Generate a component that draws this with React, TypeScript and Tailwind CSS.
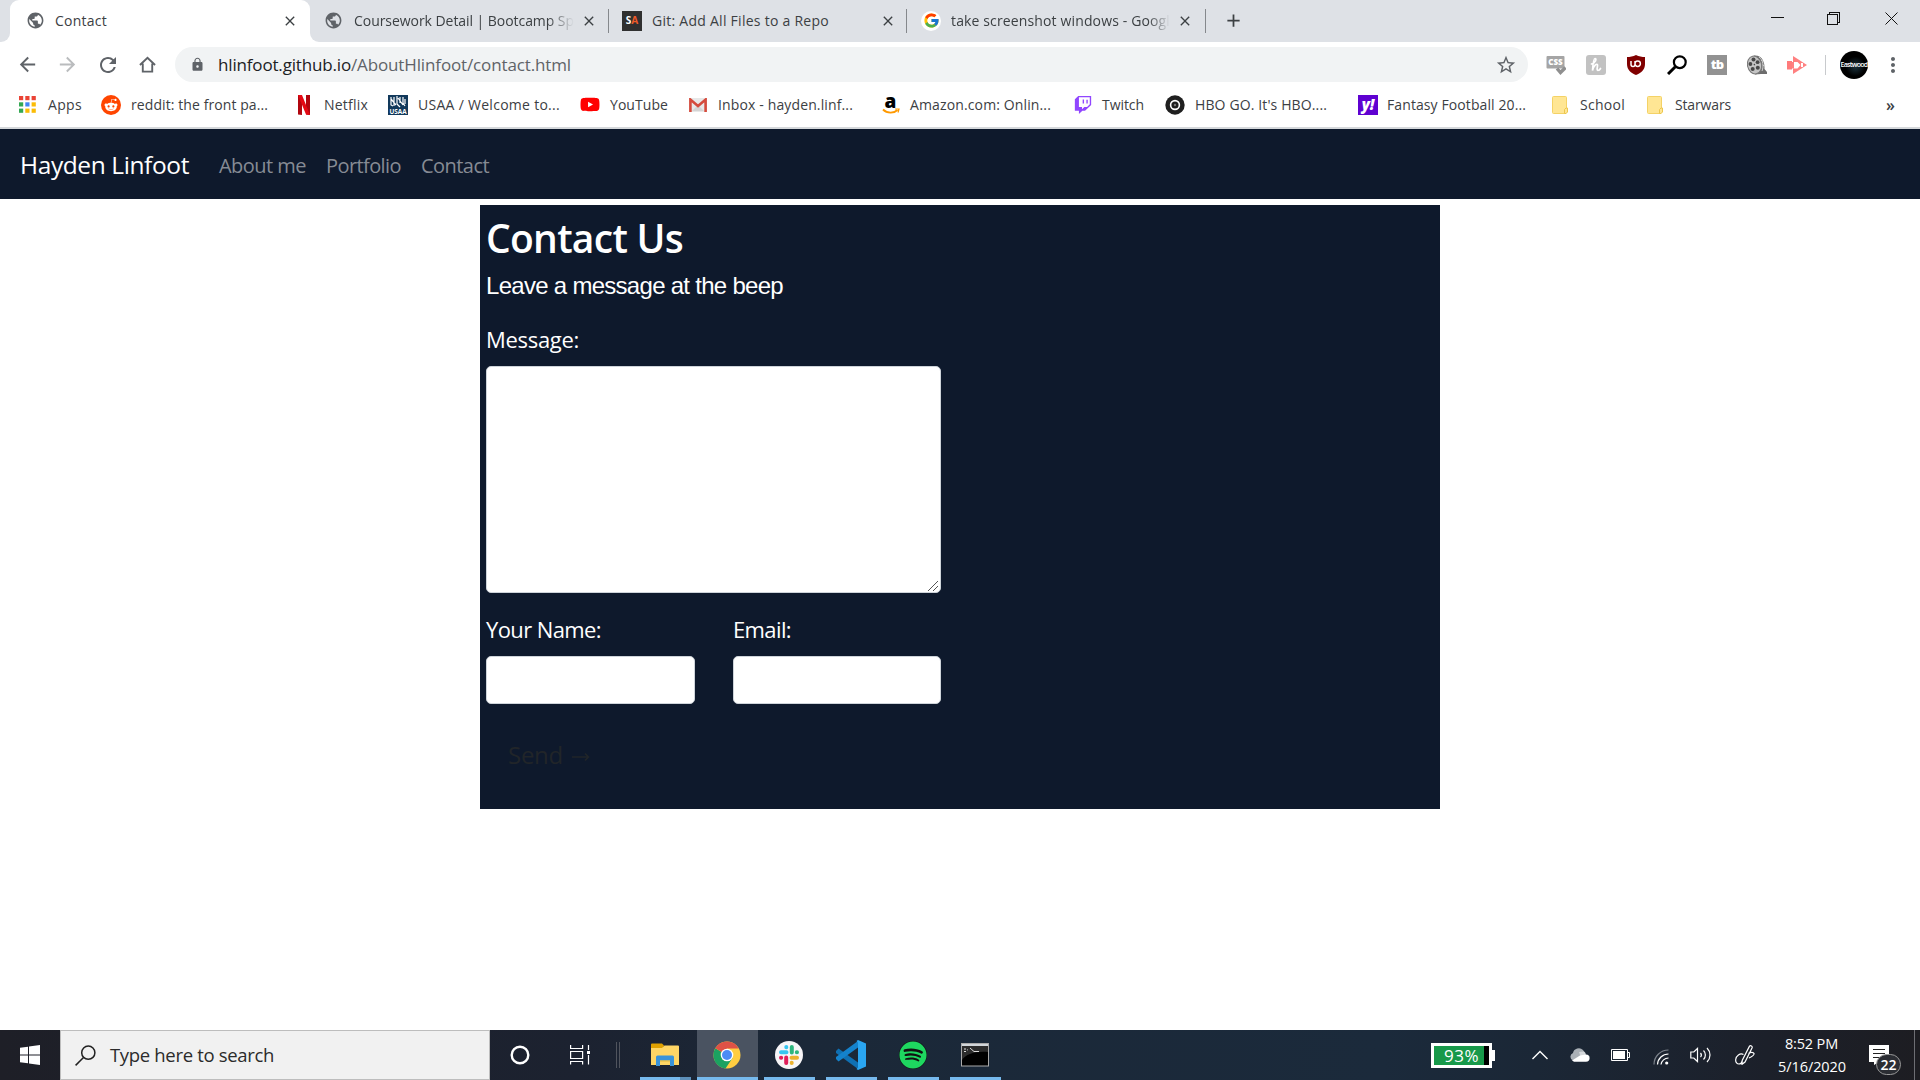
import React, { useLayoutEffect, useRef, useState } from "react";
import { MdPublic, MdClose, MdAdd, MdArrowBack, MdArrowForward, MdRefresh, MdLock, MdStarBorder, MdMoreVert } from "react-icons/md";
import { FaRedditAlien, FaYoutube, FaTwitch, FaSpotify } from "react-icons/fa";
import { FcGoogle } from "react-icons/fc";

/* Text whose letter spacing is adjusted so that it fills the given width. */
function Fit({ w, children, className = "" }: { w: number; children: string; className?: string }) {
  const ref = useRef<HTMLSpanElement>(null);
  const [sp, setSp] = useState(0);
  useLayoutEffect(() => {
    const measure = () => {
      const el = ref.current;
      if (!el) return;
      const old = el.style.letterSpacing;
      el.style.letterSpacing = "0px";
      const natural = el.getBoundingClientRect().width;
      el.style.letterSpacing = old;
      setSp((w - natural) / children.length);
    };
    measure();
    document.fonts?.ready.then(measure);
  }, [w, children]);
  return (
    <span className={"block shrink-0 whitespace-nowrap " + className} style={{ width: w }}>
      <span ref={ref} style={{ letterSpacing: sp }}>{children}</span>
    </span>
  );
}

const NetflixIcon = () => (
  <svg viewBox="0 0 12 20" className="h-5 w-3">
    <path d="M0 0h4v20l-4-.6zM8 0h4v20l-4-.6z" fill="#b1060f" />
    <path d="M0 0h4l8 20-4-.6z" fill="#e50914" />
  </svg>
);
const UsaaIcon = () => (
  <svg viewBox="0 0 20 20" className="size-5">
    <rect width="20" height="20" fill="#12395b" />
    <path d="M3 2v8l2 1M6 2v9M9 1v8M9 9l3 3M12 2v6M15 2v6l2 3M17 4v5M3 4l5 6M10 3l5 7" stroke="#fff" strokeWidth="1.2" fill="none" />
    <text x="10" y="19" textAnchor="middle" fontSize="6.4" fontWeight="700" fill="#fff" fontFamily="Open Sans">USAA</text>
  </svg>
);
const GmailIcon = () => (
  <svg viewBox="0 0 18 14" className="h-3.5 w-[18px]">
    <rect width="18" height="14" rx="1" fill="#e8e8e8" />
    <path d="M3 13l6-6 6 6" fill="#d4d4d4" />
    <path d="M1.400 14V1.600L9 8l7.600-6.400V14" fill="none" stroke="#d54b3d" strokeWidth="2.600" />
  </svg>
);
const FolderMark = () => (
  <svg viewBox="0 0 16 18" className="h-[18px] w-4">
    <rect x=".5" y=".5" width="14" height="17" rx="1" fill="#ffe694" stroke="#f4d266" />
    <path d="M12.500 17.500v-4l1.500-1.500h1.500v4l-1.500 1.500z" fill="#ffe694" stroke="#ecc64e" />
  </svg>
);
const AppsIcon = () => (
  <svg viewBox="0 0 17 17" className="size-[17px]">
    {["#ea4335", "#ea4335", "#ea4335", "#34a853", "#4285f4", "#fbbc05", "#34a853", "#fbbc05", "#fbbc05"].map((c, i) => (
      <rect key={i} x={(i % 3) * 6.3} y={Math.floor(i / 3) * 6.3} width="4.200" height="4.200" fill={c} />
    ))}
  </svg>
);
const AmazonIcon = () => (
  <svg viewBox="0 0 18 20" className="h-5 w-[18px]">
    <text x="8.500" y="12.500" textAnchor="middle" fontSize="19" fontWeight="800" fontFamily="Open Sans" fill="#000">a</text>
    <path d="M1 14.500c4 4 11 4 14.500.5" fill="none" stroke="#f90" strokeWidth="1.800" />
    <path d="M13 14h4l-1 3.500" fill="none" stroke="#f90" strokeWidth="1.200" />
  </svg>
);
const HboIcon = () => (
  <svg viewBox="0 0 20 20" className="size-5">
    <circle cx="10" cy="10" r="9.700" fill="#1f1f1f" />
    <circle cx="10" cy="10" r="4.400" fill="none" stroke="#fff" strokeWidth="1.600" />
    <circle cx="10" cy="10" r="1.200" fill="#777" />
  </svg>
);

type Mark = { icon: React.ReactNode; label: string; w: number; slot: string };
const marks: Mark[] = [
  { icon: <AppsIcon />, label: "Apps", w: 34, slot: "ml-[19px] w-[29px]" },
  { icon: <span className="flex size-5 items-center justify-center rounded-full bg-[#ff4500]"><FaRedditAlien className="size-3.5 text-white" /></span>, label: "reddit: the front pa...", w: 137, slot: "ml-[19px] w-[30px]" },
  { icon: <NetflixIcon />, label: "Netflix", w: 44, slot: "ml-[30px] w-[26px]" },
  { icon: <UsaaIcon />, label: "USAA / Welcome to...", w: 142, slot: "ml-5 w-[30px]" },
  { icon: <FaYoutube className="h-[19px] w-5 text-[#f00]" />, label: "YouTube", w: 58, slot: "ml-5 w-[30px]" },
  { icon: <GmailIcon />, label: "Inbox - hayden.linf...", w: 135, slot: "ml-[21px] w-[29px]" },
  { icon: <AmazonIcon />, label: "Amazon.com: Onlin...", w: 141, slot: "ml-[29px] w-[28px]" },
  { icon: <FaTwitch className="h-5 w-[18px] text-[#9146ff]" />, label: "Twitch", w: 42, slot: "ml-[23px] w-[28px]" },
  { icon: <HboIcon />, label: "HBO GO. It's HBO....", w: 132, slot: "ml-[21px] w-[30px]" },
  { icon: <span className="flex size-5 items-center justify-center bg-[#5f01d1] text-[15px] font-extrabold italic leading-none text-white">y!</span>, label: "Fantasy Football 20...", w: 139, slot: "ml-[31px] w-[29px]" },
  { icon: <FolderMark />, label: "School", w: 45, slot: "ml-[26px] w-[28px]" },
  { icon: <FolderMark />, label: "Starwars", w: 56, slot: "ml-[22px] w-[28px]" },
];

function TabStrip() {
  return (
    <div className="flex h-[42px] bg-[#dee1e6]">
      <div className="flex w-2.5 bg-white"><span className="h-full w-full rounded-br-[9px] bg-[#dee1e6]" /></div>
      <div className="w-[300px] bg-[#dee1e6]">
        <div className="flex h-full items-center rounded-t-[9px] bg-white pb-px pl-4">
          <MdPublic className="size-[19px] text-[#5f6368]" />
          <Fit w={52} className="ml-2.5 text-[14px] text-[#3c4043]">Contact</Fit>
          <MdClose className="ml-[175px] size-4 text-[#3c4043]" />
        </div>
      </div>
      <div className="w-[299px] bg-white">
        <div className="flex h-full items-center rounded-bl-[9px] bg-[#dee1e6] pb-px pl-[14px]">
          <MdPublic className="size-[19px] text-[#5f6368]" />
          <div className="ml-[11px] w-[220px] [mask-image:linear-gradient(to_right,#000_88%,transparent)]">
            <Fit w={220} className="text-[14px] text-[#3c4043]">Coursework Detail | Bootcamp Sp</Fit>
          </div>
          <MdClose className="ml-[7px] size-4 text-[#3c4043]" />
        </div>
      </div>
      <div className="flex w-[298px] items-center pb-px">
        <span className="-ml-px h-6 w-px bg-[#85888c]" />
        <span className="ml-[13px] flex size-5 items-center justify-center bg-[#303030] text-[10px] font-bold text-white">S<i className="not-italic text-[#f05a28]">A</i></span>
        <Fit w={177} className="ml-[10px] text-[14px] text-[#3c4043]">Git: Add All Files to a Repo</Fit>
        <MdClose className="ml-[51px] size-4 text-[#3c4043]" />
      </div>
      <div className="flex w-[299px] items-center pb-px">
        <span className="-ml-px h-6 w-px bg-[#85888c]" />
        <span className="ml-[14px] flex size-5 items-center justify-center rounded-full bg-white"><FcGoogle className="size-[17px]" /></span>
        <div className="ml-[10px] w-[219px] [mask-image:linear-gradient(to_right,#000_90%,transparent)]">
          <Fit w={219} className="text-[14px] text-[#3c4043]">take screenshot windows - Googl</Fit>
        </div>
        <MdClose className="ml-[7px] size-4 text-[#3c4043]" />
      </div>
      <div className="flex items-center pb-px">
        <span className="-ml-px h-6 w-px bg-[#85888c]" />
        <MdAdd className="ml-[17px] size-[21px] text-[#3c4043]" />
      </div>
      <svg viewBox="0 0 160 42" className="ml-auto h-[42px] w-[160px]" fill="none" stroke="#111" strokeWidth="1" shapeRendering="crispEdges">
        <path d="M11 17.500h13" />
        <path d="M67.500 14.500h10v10h-10zM69.500 14v-2h10v10h-2" />
        <path d="M125.500 12.500l12 12M137.500 12.500l-12 12" shapeRendering="auto" />
      </svg>
    </div>
  );
}

function Toolbar() {
  return (
    <div className="flex h-[45px] items-center bg-white">
      <MdArrowBack className="ml-[16px] size-[23px] text-[#5f6368]" />
      <MdArrowForward className="ml-[17px] size-[23px] text-[#babcbe]" />
      <MdRefresh className="ml-[17px] size-6 text-[#5f6368]" />
      <svg viewBox="0 0 18 18" className="ml-[19px] size-[17px]" fill="none" stroke="#5f6368" strokeWidth="2">
        <path d="M1 9.500L9 1.800l8 7.700M4 8v8.500h10V8" />
      </svg>
      <div className="ml-[19px] flex h-[35px] w-[1353px] items-center rounded-full bg-[#f1f3f4]">
        <MdLock className="ml-[15px] size-[15px] text-[#5f6368]" />
        <div className="ml-[13px] flex text-[17px]">
          <Fit w={133} className="text-[#202124]">hlinfoot.github.io</Fit>
          <Fit w={220} className="text-[#5f6368]">/AboutHlinfoot/contact.html</Fit>
        </div>
        <MdStarBorder className="ml-auto mr-[11px] size-[22px] text-[#5f6368]" />
      </div>
      <svg viewBox="0 0 20 20" className="ml-[18px] size-5">
        <rect x=".5" y="1" width="18" height="12.500" rx="1" fill="#a5a5a5" />
        <text x="9.500" y="10.300" textAnchor="middle" fontSize="8" fontWeight="800" fill="#fff" fontFamily="Open Sans">CSS</text>
        <path d="M11 13.500l3.500 4 5-5" fill="none" stroke="#8f8f8f" strokeWidth="3.400" />
      </svg>
      <span className="ml-5 flex size-5 items-center justify-center rounded-[3px] bg-[#c2c2c2]">
        <svg viewBox="0 0 20 20" className="size-5" fill="none" stroke="#fff" strokeWidth="1.700" strokeLinecap="round">
          <path d="M5.500 9c4-1 5.500-5.500 3.500-5.500-1.500 0-2 5-2.500 12C8 10 11 8 11.500 10c.3 2-1.500 5 .5 5.500 1 0 2-1 2.500-2" />
        </svg>
      </span>
      <svg viewBox="0 0 20 20" className="ml-5 size-5">
        <path d="M10 0c3 1.500 6 2 9 2v7c0 6-4 9-9 11C5 18 1 15 1 9V2c3 0 6-.5 9-2z" fill="#800000" />
        <path d="M5 6v3.500a2 2 0 004 0V6m0 2.700a2.700 2.700 0 105.400 0 2.700 2.700 0 00-5.400 0" fill="none" stroke="#fff" strokeWidth="1.500" />
      </svg>
      <svg viewBox="0 0 20 20" className="ml-[21px] size-5" fill="none" stroke="#000">
        <circle cx="12.800" cy="7.200" r="5.900" strokeWidth="2.200" />
        <path d="M8.300 11.700L1 19" strokeWidth="3" />
      </svg>
      <span className="ml-5 flex size-5 items-center justify-center bg-[#929292] text-[13px] font-extrabold leading-none tracking-[-1px] text-white">tb</span>
      <svg viewBox="0 0 20 20" className="ml-5 size-5">
        <path d="M7 .5c9-.5 11 8 10.500 13.500l2.500 3v2h-6l-6 .5z" fill="#6d6d6d" />
        <path d="M12 2c4 3 5 9 3 14M14 5l3 2M15.500 10l2.500 1" stroke="#d0d0d0" fill="none" />
        <ellipse cx="7.500" cy="10" rx="7" ry="9" fill="#c4c4c4" stroke="#777" transform="rotate(-12 7.500 10)" />
        <g fill="#484848"><circle cx="6.500" cy="4.500" r="2" /><circle cx="3.400" cy="9" r="1.900" /><circle cx="10.600" cy="7.200" r="1.900" /><circle cx="5.700" cy="14" r="2" /><circle cx="10.800" cy="12.800" r="2" /><circle cx="7.400" cy="9.600" r=".8" /></g>
      </svg>
      <svg viewBox="0 0 20 20" className="ml-5 size-5">
        <rect x="0" y="6" width="5" height="8.500" fill="#ff7b7b" />
        <path d="M6 1l14 9-14 9z" fill="#ff8080" />
        <path d="M5 7h5.500l3 3-3 3.500H5z" fill="#fff" />
        <path d="M5 7h2v6.500H5z" fill="#ff8080" />
        <path d="M14 8h2v4h-2z" fill="#fff" />
      </svg>
      <span className="ml-[18px] h-5 w-px bg-[#c8cacd]" />
      <span className="ml-[14px] flex size-7 items-center justify-center rounded-full bg-[radial-gradient(circle_at_55%_55%,#1b3440,#000_45%)] text-white">
        <Fit w={27} className="text-[7px] font-semibold leading-none">Eastwood</Fit>
      </span>
      <MdMoreVert className="ml-[13px] size-[24px] text-[#5f6368]" />
    </div>
  );
}

function Bookmarks() {
  return (
    <div className="flex h-10 items-center bg-white pb-[5px] text-[14px] text-[#3c4043]">
      {marks.map((m) => (
        <div key={m.label} className="flex items-center">
          <span className={"flex shrink-0 items-center " + m.slot}>{m.icon}</span>
          <Fit w={m.w}>{m.label}</Fit>
        </div>
      ))}
      <span className="ml-auto mr-[25px] text-[16px] font-semibold leading-none">»</span>
    </div>
  );
}

function Field({ label, w, wrap }: { label: string; w: number; wrap: string }) {
  return (
    <div className={wrap}>
      <Fit w={w} className="text-[22px] leading-[34px]">{label}</Fit>
      <div className="mt-[10px] h-12 rounded-[5px] border border-[#ced4da] bg-white" />
    </div>
  );
}

function Page() {
  return (
    <div className="h-[901px] bg-white">
      <nav className="flex h-[70px] items-center bg-[#0e192c] pl-5 pt-[3px] text-[#868b94]">
        <Fit w={169} className="text-[24.500px] text-white">Hayden Linfoot</Fit>
        <Fit w={87} className="ml-[30px] text-[20px]">About me</Fit>
        <Fit w={75} className="ml-[20px] text-[20px]">Portfolio</Fit>
        <Fit w={68} className="ml-[20px] text-[20px]">Contact</Fit>
      </nav>
      <main className="mx-auto mt-1.5 h-[604px] w-[960px] bg-[#0e192c] px-1.5 pt-2 text-white">
        <h1><Fit w={197} className="text-[39px] font-semibold leading-[50px]">Contact Us</Fit></h1>
        <Fit w={297} className="mt-[5px] font-['Liberation_Sans',sans-serif] text-[24px] leading-9">Leave a message at the beep</Fit>
        <Fit w={93} className="mt-[18px] text-[22px] leading-[34px]">Message:</Fit>
        <div className="mt-[10px] flex h-[227px] w-[455px] items-end justify-end rounded-[5px] border border-[#ced4da] bg-white">
          <svg viewBox="0 0 12 12" className="mr-px size-3" stroke="#555" fill="none"><path d="M1 11L11 1M6 11l5-5" /></svg>
        </div>
        <div className="mt-[19px] flex">
          <Field label="Your Name:" w={115} wrap="w-[209px]" />
          <Field label="Email:" w={58} wrap="ml-[38px] w-[208px]" />
        </div>
        <div className="mt-[32px] flex pl-[22px] text-[24px] leading-[38px] text-[#212529]">
          <Fit w={55}>Send</Fit>
          <svg viewBox="0 0 18 10" className="ml-[9px] mt-[16px] h-2.5 w-[18px]" fill="none" stroke="#212529" strokeWidth="1.600"><path d="M0 5h17M13 1.500L16.500 5 13 8.500" /></svg>
        </div>
      </main>
    </div>
  );
}

const ExplorerIcon = () => (
  <svg viewBox="0 0 28 24" className="h-6 w-7">
    <path d="M0 1.500A1 1 0 011 .5h10l2 2-1 2.500H0z" fill="#e0a100" />
    <path d="M0 5h11l2.500-2.500H27a1 1 0 011 1V22H0z" fill="#ffd665" />
    <path d="M5 23V14a1.500 1.500 0 011.500-1.500h15A1.500 1.500 0 0123 14v9h-4v-5.500H9V23z" fill="#3a93d9" />
    <path d="M9 17.500h10v1H9z" fill="#e5b93c" />
  </svg>
);
const ChromeIcon = () => (
  <svg viewBox="0 0 28 28" className="size-7">
    <circle cx="14" cy="14" r="13.500" fill="#ffcd41" />
    <path d="M14 14L2.300 7.200A13.500 13.500 0 0012.500 27.500L19.500 17z" fill="#1ba261" />
    <path d="M14 14L2.300 7.200A13.500 13.500 0 0125.700 7.500H14z" fill="#de5246" />
    <circle cx="14" cy="14" r="6.300" fill="#fff" />
    <circle cx="14" cy="14" r="5" fill="#4c8bf5" />
  </svg>
);
const SlackIcon = () => (
  <svg viewBox="0 0 28 28" className="size-7">
    <circle cx="14" cy="14" r="14" fill="#f7f5f7" />
    <g fill="none" strokeWidth="4" strokeLinecap="round">
      <path d="M6 11.200h5.500M11.300 6v.2" stroke="#36c5f0" />
      <path d="M16.800 6v5.500M22 11.200h-.2" stroke="#2eb67d" />
      <path d="M22 16.800h-5.500M16.700 22v-.2" stroke="#ecb22e" />
      <path d="M11.200 22v-5.500M6 16.800h.2" stroke="#e01e5a" />
    </g>
  </svg>
);
const CodeIcon = () => (
  <svg viewBox="0 0 30 30" className="size-[30px]">
    <path d="M0 11l2.500-2.500L22 22.500V29L0 13z" fill="#0f70b3" />
    <path d="M0 19l2.500 2.500L22 7.500V1L0 17z" fill="#1482cc" />
    <path d="M22 0l8 3.500v23L22 30l-1.500-1 1.500-1.500v-25L20.500 1z" fill="#2aa6f2" />
  </svg>
);
const TerminalIcon = () => (
  <svg viewBox="0 0 28 24" className="h-6 w-7">
    <rect x=".5" y=".5" width="27" height="22.500" fill="#000" stroke="#aaa" />
    <path d="M1 1h26v2H1z" fill="#d2d6da" />
    <path d="M1 3h26v6C14 8 5 11 1 17z" fill="#2c2c2c" />
    <path d="M3 6h2M3 8.500h2M6.500 6.500v.8M9 5l4 3.500M13 8.500h5" stroke="#ddd" />
  </svg>
);

const tasks = [
  { icon: <ExplorerIcon />, box: "ml-5 w-[51px]", line: "w-[51px] bg-[linear-gradient(to_right,#76b9ed_40px,#5d8fb9_40px)]" },
  { icon: <ChromeIcon />, box: "ml-[6px] w-[61px] bg-[#4a5361]", line: "w-[61px] bg-[#76b9ed]" },
  { icon: <SlackIcon />, box: "ml-[6px] w-[51px]", line: "w-[51px] bg-[#76b9ed]" },
  { icon: <CodeIcon />, box: "ml-[11px] w-[51px]", line: "w-[51px] bg-[#76b9ed]" },
  { icon: <span className="flex size-7 items-center justify-center rounded-full bg-[#111]"><FaSpotify className="size-7 text-[#1ed760]" /></span>, box: "ml-[11px] w-[51px]", line: "w-[51px] bg-[#76b9ed]" },
  { icon: <TerminalIcon />, box: "ml-[11px] w-[51px]", line: "w-[51px] bg-[#76b9ed]" },
];

function Taskbar() {
  return (
    <div className="flex h-[50px] bg-[linear-gradient(to_right,#1e1f27_0%,#1c2230_30%,#1b2838_42%,#1b2a3b_72%,#1b2736_80%,#1c202a_92%,#1d1d22_100%)] text-white">
      <div className="flex w-[60px] items-center justify-center">
        <svg viewBox="0 0 20 20" className="size-5" fill="#fff"><path d="M0 2.800l8-1.100v7.800H0zM9 1.600L20 0v9.500H9zM0 10.500h8v7.800l-8-1.100zM9 10.500h11V20L9 18.400z" /></svg>
      </div>
      <div className="flex w-[430px] items-center border border-[#bdbdbd] bg-[#f1f1f1]">
        <svg viewBox="0 0 21 21" className="ml-[14px] size-[21px]" fill="none" stroke="#222" strokeWidth="1.500"><circle cx="13.300" cy="7.700" r="6.600" /><path d="M8.500 12.500L.6 20.400" /></svg>
        <Fit w={164} className="ml-[14px] text-[18.500px] text-[#2b2b2b]">Type here to search</Fit>
      </div>
      <div className="flex w-[60px] items-center justify-center">
        <svg viewBox="0 0 20 20" className="size-5"><circle cx="10" cy="10" r="8.300" fill="none" stroke="#fff" strokeWidth="2.400" /></svg>
      </div>
      <div className="flex w-[60px] items-center justify-center">
        <svg viewBox="0 0 20 20" className="size-5" fill="none" stroke="#fff" strokeWidth="1.200"><path d="M.6 0v3.500h12V0M.6 6.500h12v7H.6zM.6 19.500v-3h12v3M18.500 0v5M18.500 10v9.500" /><path d="M17 6h3v3h-3z" fill="#fff" stroke="none" /></svg>
      </div>
      <div className="ml-[6px] flex w-[4px] items-center justify-between"><i className="h-[26px] w-px bg-[#50545d]" /><i className="h-[26px] w-px bg-[#50545d]" /></div>
      {tasks.map((t, i) => (
        <div key={i} className={"flex flex-col items-center first-of-type:ml-0 " + t.box}>
          <span className="flex flex-1 items-center pr-[2px] pt-[2px]">{t.icon}</span>
          <span className={"h-[3px] " + t.line} />
        </div>
      ))}
      <div className="ml-[430px] flex items-center">
        <div className="flex h-[25px] w-[61px] border-[3px] border-white bg-black">
          <span className="flex h-full w-[50px] items-center justify-center bg-[#17994a] pl-[5px]"><Fit w={35} className="text-[17px] leading-none">93%</Fit></span>
        </div>
        <i className="h-[11px] w-[3px] bg-white" />
      </div>
      <svg viewBox="0 0 16 10" className="ml-[37px] h-2.5 w-4 self-center" fill="none" stroke="#fff" strokeWidth="1.400"><path d="M.5 9L8 1.500 15.500 9" /></svg>
      <svg viewBox="0 0 21 14" className="ml-[21px] h-3.5 w-[21px] self-center"><path d="M4 12.500A4 4 0 014 5a6 6 0 0110-3l2 3-9 8z" fill="#aab0b6" /><path d="M10 4l5-.5a5 5 0 012 3L12 10z" fill="#d4d7da" /><path d="M3 12.500L11 7.500l6-1a3.600 3.600 0 010 7.200H5z" fill="#fff" /></svg>
      <svg viewBox="0 0 19 12" className="ml-[21px] h-3 w-[19px] self-center"><path d="M.5.5h16v11H.5zM17 3.500h1.500v5H17" fill="none" stroke="#fff" /><path d="M2 2h12v8H2z" fill="#fff" /></svg>
      <svg viewBox="0 0 16 16" className="ml-[23px] mt-1 size-4 self-center" fill="none" stroke="#fff" strokeWidth="1.200"><path d="M1 15.500A14.500 14.500 0 0115.500 1" stroke="#7d838c" /><path d="M4.500 15.500A11 11 0 0115.500 5M8 15.500A7.500 7.500 0 0115.500 9" /><circle cx="13.700" cy="14" r="1.600" fill="#fff" stroke="none" /></svg>
      <svg viewBox="0 0 22 18" className="ml-[21px] h-[18px] w-[22px] self-center" fill="none" stroke="#fff" strokeWidth="1.200"><path d="M.8 6h3L7.500 2.500v13L3.800 12h-3zM10.500 7c1 1.200 1 3 0 4M13.500 4.500c2.500 2.500 2.500 6.500 0 9M17 2c4 4 4 10 0 14" /></svg>
      <svg viewBox="0 0 20 20" className="ml-[23px] size-5 self-center" fill="none" stroke="#fff" strokeWidth="1.200">
        <path d="M14.500 1.200c1-1.200 3.300 0 2.500 1.800L10 17l-3 2.300.2-3.800zM8.500 9.500C5 7.500 1 11 .7 14.500c-.3 3 1.500 4.500 3.300 4.500 2 0 2.800-1.500 3.200-3M13.500 8.500c2-1.500 5-1.500 5.500 0s-2 3-5 4.500" />
      </svg>
      <div className="ml-[23px] w-[68px] self-center text-[14.500px] leading-[23px]">
        <Fit w={53} className="ml-[7px]">8:52 PM</Fit>
        <Fit w={68}>5/16/2020</Fit>
      </div>
      <div className="relative ml-[23px] w-[34px]">
        <svg viewBox="0 0 20 20" className="mt-[15px] size-5"><path d="M0 0h20v17H10l-5 3v-3H0z" fill="#fff" /><path d="M4 4.500h12M4 8.500h12M4 12.500h8" stroke="#222" strokeWidth="1.200" /></svg>
        <span className="absolute left-[7px] top-[24px] flex h-[21px] w-[25px] items-center justify-center rounded-full border border-[#999] bg-[#2b2d33] text-[14px] font-semibold leading-none">22</span>
      </div>
      <i className="ml-[11px] w-px bg-[#6d6e73]" />
    </div>
  );
}

export default function App() {
  return (
    <div className="flex h-[1080px] w-[1920px] flex-col overflow-hidden bg-white font-['Open_Sans',sans-serif]">
      <TabStrip />
      <Toolbar />
      <Bookmarks />
      <div className="h-0.5 shrink-0 bg-[#d5d8db]" />
      <Page />
      <Taskbar />
    </div>
  );
}
